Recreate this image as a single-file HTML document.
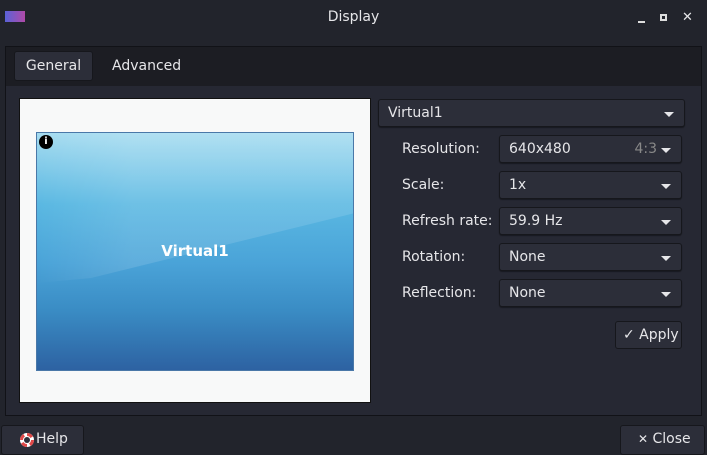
<!DOCTYPE html><html><head><style>
*{box-sizing:border-box;margin:0;padding:0}
body{width:707px;height:453px;background:#22242c;font-family:"DejaVu Sans","Liberation Sans",sans-serif;font-size:14px;color:#e6e6e9;position:relative;overflow:hidden}
.a{position:absolute}
.combo{position:absolute;background:#2c2e39;border:1px solid #16171c;border-radius:3px;box-shadow:0 1px 1px rgba(0,0,0,.4);padding:1px 0 0 9px;line-height:25px}
.combo:after{content:"";position:absolute;right:10px;top:12px;border-left:5px solid transparent;border-right:5px solid transparent;border-top:5px solid #e6e6e9}
.lbl{position:absolute;left:402px}
.btn{position:absolute;background:#2c2e39;border:1px solid #16171c;border-radius:3px;line-height:27px}
</style></head><body>
<div class="a" style="left:5px;top:11px;width:20px;height:11px;background:linear-gradient(90deg,#5a62d8,#b04aa8)"></div>
<div class="a" style="left:0;width:707px;top:9px;text-align:center;font-size:14px">Display</div>
<div class="a" style="left:638px;top:21px;width:7px;height:2px;background:#ddd"></div>
<div class="a" style="left:660px;top:14px;width:7px;height:7px;border:2px solid #ddd"></div>
<div class="a" style="left:682px;top:10px;font-size:13px;font-weight:bold">✕</div>
<div class="a" style="left:5px;top:46px;width:697px;height:370px;border:1px solid #111217;background:#262833"></div>
<div class="a" style="left:6px;top:47px;width:695px;height:39px;background:#1c1d23"></div>
<div class="btn" style="left:14px;top:51px;width:79px;height:30px;text-align:center;line-height:29px">General</div>
<div class="a" style="left:112px;top:58px">Advanced</div>
<div class="a" style="left:19px;top:98px;width:352px;height:305px;background:#f8f9f9;border:1px solid #111"></div>
<div class="a" style="left:36px;top:132px;width:318px;height:239px;border:1px solid #4a78a8;background:linear-gradient(180deg,#a6dcf0 0%,#5ab8e2 30%,#4aa3d8 55%,#3a8cc4 75%,#2d62a2 100%);overflow:hidden">
<svg class="a" style="left:0;top:0" width="318" height="239"><defs><linearGradient id="g" x1="0" x2="1"><stop offset="0" stop-color="#fff" stop-opacity="0"/><stop offset=".3" stop-color="#fff" stop-opacity=".12"/><stop offset="1" stop-color="#fff" stop-opacity=".12"/></linearGradient></defs><polygon points="0,0 318,0 318,80 54,145 0,150" fill="url(#g)"/></svg>
<div class="a" style="left:0;width:100%;top:109px;text-align:center;font-weight:bold;font-size:15px;color:#fff">Virtual1</div>
<div class="a" style="left:2px;top:2px;width:14px;height:14px;border-radius:50%;background:#000;color:#fff;font-size:10px;font-weight:bold;text-align:center;line-height:14px">i</div>
</div>
<div class="combo" style="left:378px;top:99px;width:307px;height:28px">Virtual1</div>
<div class="lbl" style="top:141px">Resolution:</div>
<div class="combo" style="left:499px;top:135px;width:183px;height:28px">640x480<span class="a" style="right:24px;color:#888">4:3</span></div>
<div class="lbl" style="top:177px">Scale:</div>
<div class="combo" style="left:499px;top:171px;width:183px;height:28px">1x</div>
<div class="lbl" style="top:213px">Refresh rate:</div>
<div class="combo" style="left:499px;top:207px;width:183px;height:28px">59.9 Hz</div>
<div class="lbl" style="top:249px">Rotation:</div>
<div class="combo" style="left:499px;top:243px;width:183px;height:28px">None</div>
<div class="lbl" style="top:285px">Reflection:</div>
<div class="combo" style="left:499px;top:279px;width:183px;height:28px">None</div>
<div class="btn" style="left:615px;top:321px;width:67px;height:28px;padding-left:7px"><b>✓</b> Apply</div>
<div class="btn" style="left:1px;top:425px;width:83px;height:30px;padding-left:16px"><svg class="a" style="left:17px;top:6px" width="16" height="16"><circle cx="8" cy="8" r="7" fill="#fff"/><circle cx="8" cy="8" r="5.5" fill="none" stroke="#e04848" stroke-width="3" stroke-dasharray="5.6 3"/><circle cx="8" cy="8" r="3" fill="#2c2e39"/></svg><span style="padding-left:18px">Help</span></div>
<div class="btn" style="left:620px;top:425px;width:85px;height:30px;padding-left:17px"><b style="font-size:12px">✕</b> Close</div>
</body></html>
